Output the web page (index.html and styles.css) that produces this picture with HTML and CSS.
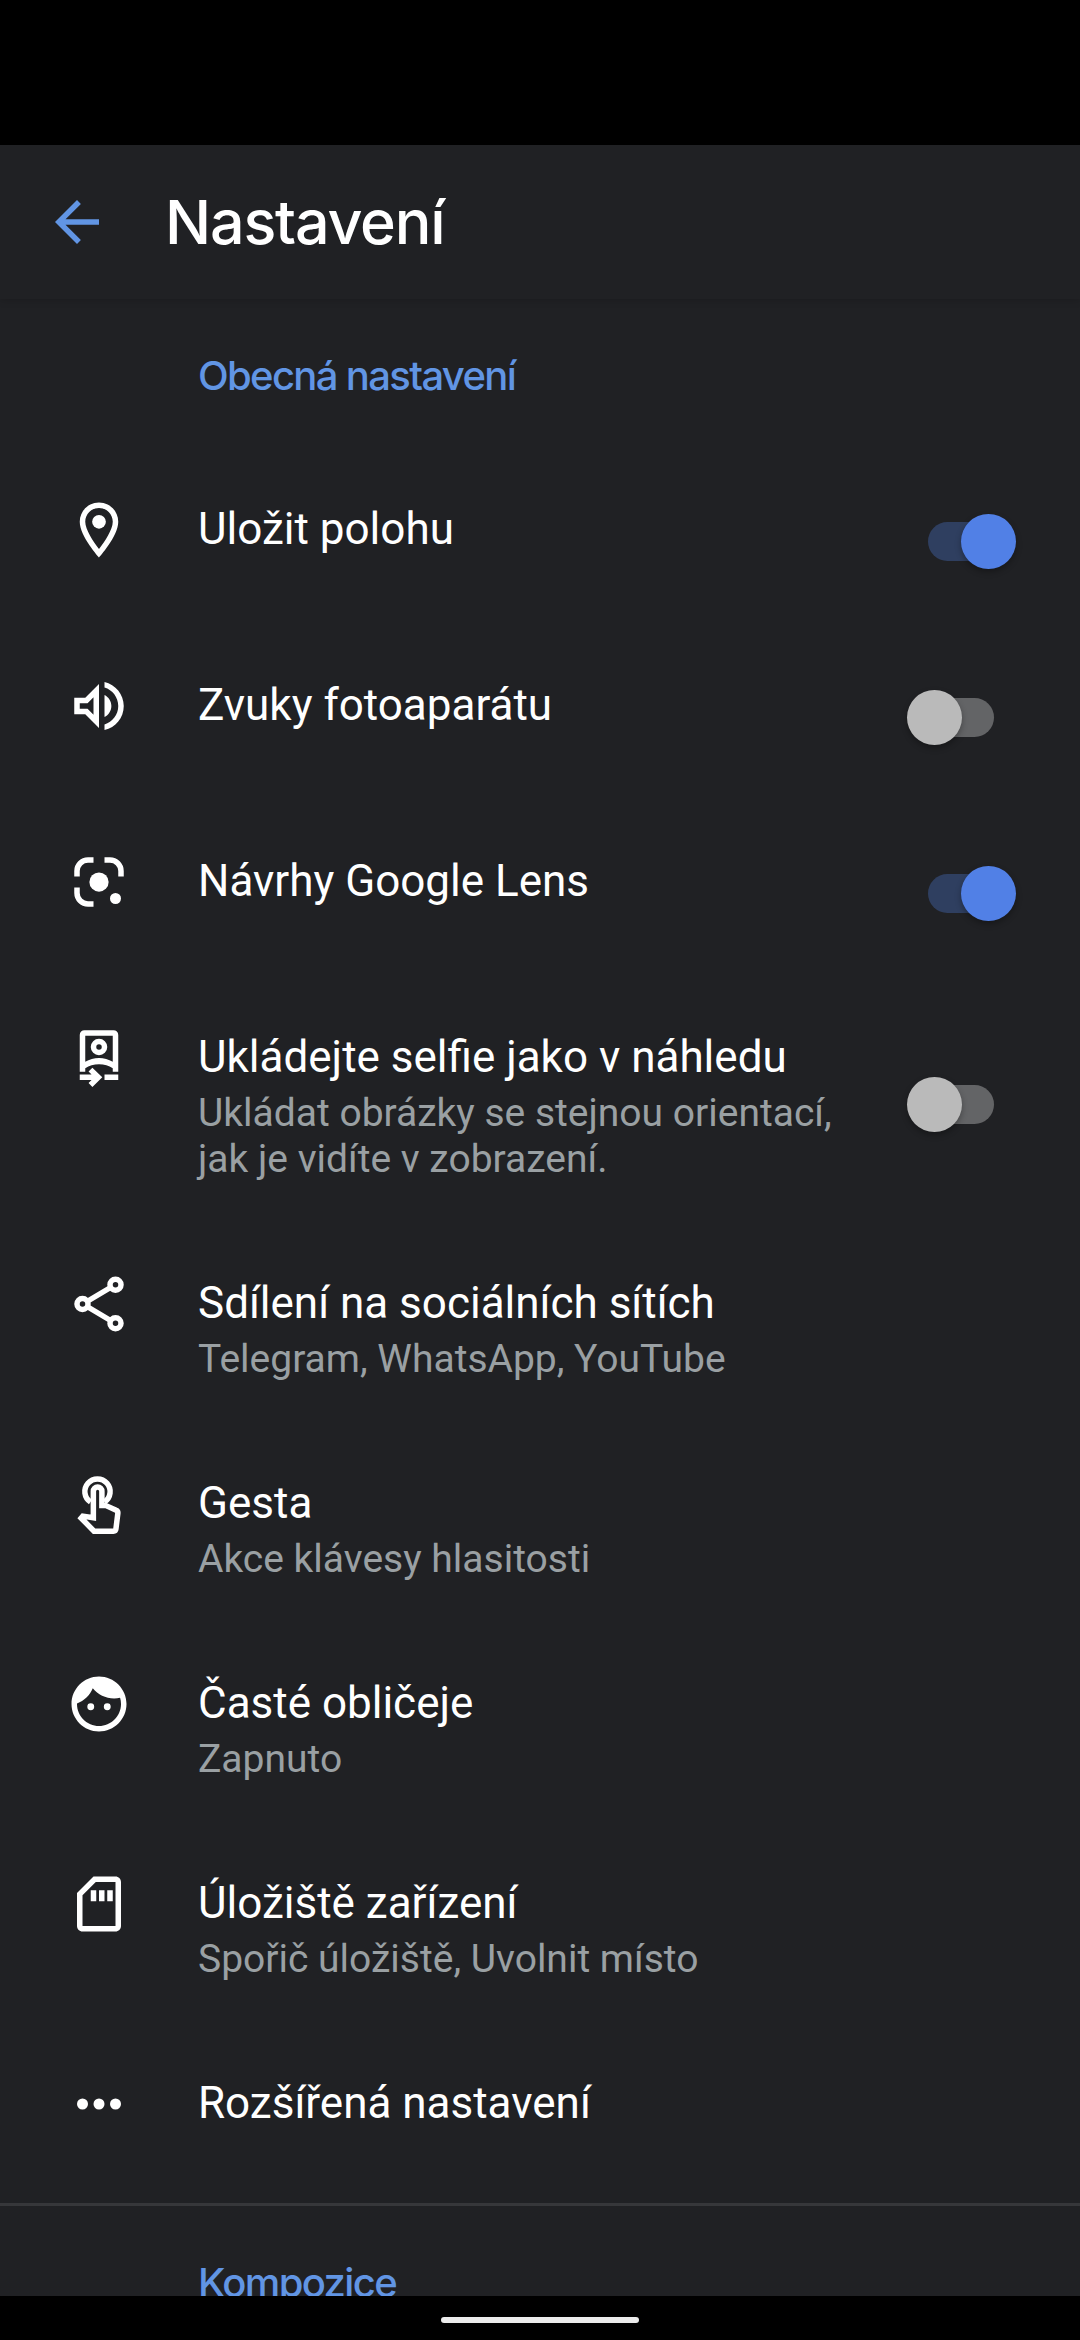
FILE: index.html
```html
<!DOCTYPE html>
<html lang="cs">
<head>
<meta charset="utf-8">
<title>Nastavení</title>
<link rel="stylesheet" href="styles.css">
</head>
<body>
<div class="screen">
  <div class="status-bar"></div>
  <header class="app-bar">
    <svg class="icon back" viewBox="0 0 24 24"><path d="M20 11H7.83l5.59-5.59L12 4l-8 8 8 8 1.41-1.41L7.83 13H20z"/></svg>
    <h1 class="app-title">Nastavení</h1>
  </header>
  <main class="list">
    <h2 class="section section-general">Obecná nastavení</h2>
    <div class="row">
      <svg class="icon" viewBox="0 0 24 24"><path d="M12 2C8.13 2 5 5.13 5 9c0 5.25 7 13 7 13s7-7.75 7-13c0-3.87-3.13-7-7-7zM7 9c0-2.76 2.24-5 5-5s5 2.24 5 5c0 2.88-2.88 7.19-5 9.88C9.92 16.21 7 11.85 7 9z"/><circle cx="12" cy="9" r="2.5"/></svg>
      <div class="text"><div class="title">Uložit polohu</div></div>
      <div class="switch on"><div class="thumb"></div></div>
    </div>
    <div class="row">
      <svg class="icon" viewBox="0 0 24 24"><path d="M3 9v6h4l5 5V4L7 9H3zm7-.17v6.34L7.83 13H5v-2h2.83L10 8.83zM16.5 12c0-1.77-1.02-3.29-2.5-4.03v8.05c1.48-.73 2.5-2.25 2.5-4.02zM14 3.23v2.06c2.89.86 5 3.54 5 6.71s-2.11 5.85-5 6.71v2.06c4.01-.91 7-4.49 7-8.77s-2.99-7.86-7-8.77z"/></svg>
      <div class="text"><div class="title">Zvuky fotoaparátu</div></div>
      <div class="switch"><div class="thumb"></div></div>
    </div>
    <div class="row">
      <svg class="icon" viewBox="0 0 24 24"><path class="line" d="M4 10V8a4 4 0 0 1 4-4h2M14 4h2a4 4 0 0 1 4 4v2M4 14v2a4 4 0 0 0 4 4h2"/><circle cx="12" cy="12" r="3.5"/><circle cx="18" cy="18" r="2"/></svg>
      <div class="text"><div class="title">Návrhy Google Lens</div></div>
      <div class="switch on"><div class="thumb"></div></div>
    </div>
    <div class="row row-tall">
      <svg class="icon" viewBox="0 0 24 24"><path fill-rule="evenodd" d="M6.700 1.900h10.600a1.700 1.700 0 0 1 1.700 1.700V17h-2v-1.300c-1.400-.9-3.100-1.400-5-1.400s-3.600.5-5 1.400V17H5V3.600a1.700 1.700 0 0 1 1.700-1.700zM7 3.900v9.500c1.500-.9 3.200-1.400 5-1.400s3.500.5 5 1.400V3.900z"/><circle class="line" cx="12" cy="8" r="2"/><path d="M5 18h4.300l-1.100-1.100 1.400-1.400 3.600 3.500-3.600 3.500-1.400-1.400L9.300 20H5zM14 18h5v2h-5z"/></svg>
      <div class="text"><div class="title">Ukládejte selfie jako v náhledu</div><div class="sub">Ukládat obrázky se stejnou orientací, jak je vidíte v zobrazení.</div></div>
      <div class="switch"><div class="thumb"></div></div>
    </div>
    <div class="row row-double">
      <svg class="icon" viewBox="0 0 24 24"><g class="line"><circle cx="18" cy="5" r="2"/><circle cx="6" cy="12" r="2"/><circle cx="18" cy="19" r="2"/><path d="M7.800 11l8.400-5M7.800 13l8.400 5"/></g></svg>
      <div class="text"><div class="title">Sdílení na sociálních sítích</div><div class="sub">Telegram, WhatsApp, YouTube</div></div>
    </div>
    <div class="row row-double">
      <svg class="icon" viewBox="0 0 24 24"><path class="line" d="M8.900 11.300a4.600 4.600 0 1 1 5.100 0"/><path class="line" d="M9.950 17V7.350a1.550 1.550 0 0 1 3.100 0V12.500h1.300l3.900 1.800q.7.300.6 1.100l-.7 5.700q-.1.800-.9.800H10.200L5.500 17.100l.6-.7z"/></svg>
      <div class="text"><div class="title">Gesta</div><div class="sub">Akce klávesy hlasitosti</div></div>
    </div>
    <div class="row row-double">
      <svg class="icon" viewBox="0 0 24 24"><path d="M10.250 13a1.250 1.250 0 1 1-2.500 0 1.250 1.250 0 0 1 2.500 0zM15 11.750a1.250 1.250 0 1 0 0 2.500 1.250 1.250 0 0 0 0-2.500zM22 12c0 5.520-4.480 10-10 10S2 17.520 2 12 6.480 2 12 2s10 4.480 10 10zm-2 0c0-.78-.12-1.530-.33-2.240-.7.150-1.420.24-2.170.24-3.130 0-5.920-1.440-7.760-3.690C8.690 8.870 6.600 10.880 4 11.860c.01.040 0 .09 0 .14 0 4.410 3.590 8 8 8s8-3.590 8-8z"/></svg>
      <div class="text"><div class="title">Časté obličeje</div><div class="sub">Zapnuto</div></div>
    </div>
    <div class="row row-double">
      <svg class="icon" viewBox="0 0 24 24"><path d="M18 2h-8L4 8v12c0 1.100.9 2 2 2h12c1.100 0 2-.9 2-2V4c0-1.100-.9-2-2-2zm0 18H6V8.830L10.830 4H18v16zM9 7h2v4H9zM12 7h2v4h-2zM15 7h2v4h-2z"/></svg>
      <div class="text"><div class="title">Úložiště zařízení</div><div class="sub">Spořič úložiště, Uvolnit místo</div></div>
    </div>
    <div class="row">
      <svg class="icon" viewBox="0 0 24 24"><circle cx="6" cy="12" r="2"/><circle cx="12" cy="12" r="2"/><circle cx="18" cy="12" r="2"/></svg>
      <div class="text"><div class="title">Rozšířená nastavení</div></div>
    </div>
    <div class="divider"></div>
    <h2 class="section section-composition">Kompozice</h2>
  </main>
  <nav class="nav-bar"><div class="pill"></div></nav>
</div>
</body>
</html>
```

FILE: styles.css
```css
* { box-sizing: border-box; }
body { margin: 0; background: #000; font-family: Roboto, sans-serif; }
.screen { display: flex; flex-direction: column; width: 1080px; height: 2340px; background: #202124; overflow: hidden; }
.status-bar { flex: none; height: 145px; background: #000; }
.app-bar { flex: none; display: flex; align-items: center; height: 154px; padding-left: 44px; gap: 55px; box-shadow: 0 1px 8px rgba(0, 0, 0, .18); }
.icon { flex: none; width: 66px; height: 66px; fill: #fff; }
.line { fill: none; stroke: #fff; stroke-width: 2; }
.back { fill: #6195e4; }
.app-title { margin: 0; font: 500 61px/72px Inter, sans-serif; letter-spacing: -1.200px; color: #fff; }
.list { flex: 1; min-height: 0; overflow: hidden; }
.section { margin: 0; height: 154px; padding: 52px 0 0 198px; font: 500 40px/50px Inter, sans-serif; letter-spacing: -1.650px; color: #6195e4; }
.row { display: flex; height: 176px; padding: 44px 64px 0 66px; }
.row-tall { height: 246px; }
.row-double { height: 200px; }
.text { width: 660px; margin-left: 66px; padding-top: 6px; }
.title { font-size: 44px; line-height: 52px; color: #fff; }
.sub { margin-top: 7px; font-size: 39px; line-height: 46px; color: #9aa0a3; }
.switch { display: flex; align-items: center; align-self: center; width: 66px; height: 39px; margin: -44px 20px 0 auto; border-radius: 20px; background: #636466; }
.row .switch { margin-right: 22px; }
.switch.on { background: #2f3f60; }
.thumb { flex: none; width: 55px; height: 55px; margin-left: -21.500px; border-radius: 50%; background: #bababa; box-shadow: 0 3px 6px rgba(0, 0, 0, .3); }
.on .thumb { margin-left: 32.500px; background: #5180e6; }
.divider { height: 3px; background: #36373a; }
.nav-bar { flex: none; display: flex; justify-content: center; height: 44px; padding-top: 21px; background: #000; }
.pill { width: 198px; height: 6px; border-radius: 3px; background: #ebebeb; }
```
